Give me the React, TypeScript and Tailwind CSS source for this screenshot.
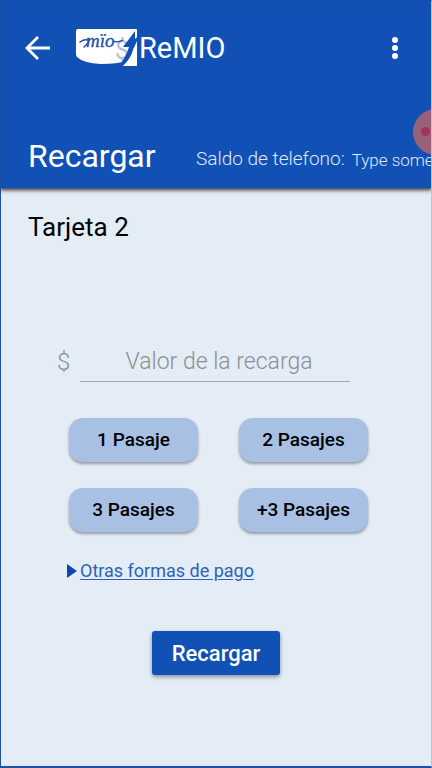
import React from "react";

const fares = ["1 Pasaje", "2 Pasajes", "3 Pasajes", "+3 Pasajes"];

function Logo() {
  return (
    <svg viewBox="0 0 64 40" className="h-10 w-16 shrink-0" role="img" aria-label="mio">
      <path d="M3 1H61Q62 1 62 2V37Q62 38 61 38H48L52 33Q42 36 26 36Q8 35 2 29Q1 28 1 26V3Q1 1 3 1Z" fill="#fff" />
      <text x="40" y="31" fontSize="25" fill="#b9bce0" fontFamily="Roboto, sans-serif">$</text>
      <path d="M60 3L48 19H54Q51 29 44 38H48Q57 29 59 20L62 17V9L60 11Z" fill="#1150b5" />
      <path d="M62 13V38H48Q56 31 58 22Z" fill="#fff" />
      <path d="M5 14Q9 11 13 12Q15 14 9 19" fill="none" stroke="#1c4fa8" strokeWidth="1.5" strokeLinecap="round" />
      <text x="11" y="19" fontSize="19" fontStyle="italic" fill="#1c4fa8" stroke="#1c4fa8" strokeWidth=".3" fontFamily="'Liberation Serif', serif">mïo</text>
      <path d="M38 13Q43 15 48 12" fill="none" stroke="#1c4fa8" strokeWidth="1.2" />
    </svg>
  );
}

export default function App() {
  return (
    <div className="relative flex min-h-screen flex-col overflow-hidden border border-b-2 border-[#1c4fa8] border-r-[#a9c6f7] bg-[#e4ecf6] font-[Roboto,sans-serif] text-black">
      <header className="relative bg-[#1150b5] text-white shadow-[0_1px_4px_1px_rgba(0,0,0,0.8)]">
        <div className="flex h-[94px] items-center px-6">
          <button type="button" aria-label="Volver" className="mr-6 shrink-0">
            <svg viewBox="0 0 26 26" className="size-[26px]" fill="none" stroke="currentColor" strokeWidth="2.8">
              <path d="M25 13H3M13 2L2 13L13 24" />
            </svg>
          </button>
          <Logo />
          <span className="text-[29px] leading-9">ReMIO</span>
          <button type="button" aria-label="Menú" className="ml-auto">
            <svg viewBox="0 0 26 26" className="size-[26px]" fill="currentColor">
              <circle cx="14" cy="5" r="3" />
              <circle cx="14" cy="13" r="3" />
              <circle cx="14" cy="21" r="3" />
            </svg>
          </button>
        </div>
        <div className="flex h-[93px] items-end overflow-hidden pb-3 pl-[27px] whitespace-nowrap">
          <h1 className="w-[168px] shrink-0 text-[32px] leading-10">Recargar</h1>
          <label htmlFor="saldo" className="pb-[3px] text-[19px] leading-7 font-light text-[#e0ebfa]">Saldo de telefono:</label>
          <input id="saldo" placeholder="Type something" className="ml-[7px] w-0 min-w-0 flex-1 pb-1 text-[17px] leading-6 font-light outline-none placeholder:text-[#e0ebfa]" />
        </div>
        <div className="absolute top-[108px] -right-[28px] size-[46px] rounded-full bg-[#9a6077]">
          <div className="absolute top-[18px] left-[8px] size-[9px] rounded-full bg-[#a33358]" />
        </div>
      </header>

      <main className="flex flex-1 flex-col">
        <h2 className="pt-[23px] pl-[27px] text-[26px] leading-8">Tarjeta 2</h2>
        <div className="mt-[99px] flex items-center pr-[81px] pl-14 text-2xl leading-10 font-light text-[#8c9094]">
          <label htmlFor="valor" className="w-[23px]">$</label>
          <input id="valor" placeholder="Valor de la recarga" className="h-10 min-w-0 flex-1 border-b border-[#a4a8ab] pl-2 text-center text-[23px] outline-none placeholder:text-[#8c9094]" />
        </div>
        <div className="mt-9 grid grid-cols-2 gap-x-[41px] gap-y-[26px] pr-[63px] pl-[68px]">
          {fares.map((fare) => (
            <button key={fare} type="button" className="h-11 rounded-[14px] bg-[#a8c0e4] text-[19px] font-medium shadow-[0_2px_3px_rgba(0,0,0,0.35)]">
              {fare}
            </button>
          ))}
        </div>
        <a href="#pago" className="mt-[25px] flex items-center self-start pl-[66px] text-lg leading-7 text-[#2d63b8]">
          <svg viewBox="0 0 10 14" className="mr-[3px] h-[14px] w-[10px]" fill="#0a48b0">
            <path d="M0 0L10 7L0 14Z" />
          </svg>
          <span className="underline underline-offset-2">Otras formas de pago</span>
        </a>
        <button type="button" className="mt-[46px] h-11 w-32 self-center rounded-[3px] bg-[#1150b5] text-[22px] font-medium text-white shadow-[0_2px_4px_rgba(0,0,0,0.4)]">
          Recargar
        </button>
      </main>
    </div>
  );
}
